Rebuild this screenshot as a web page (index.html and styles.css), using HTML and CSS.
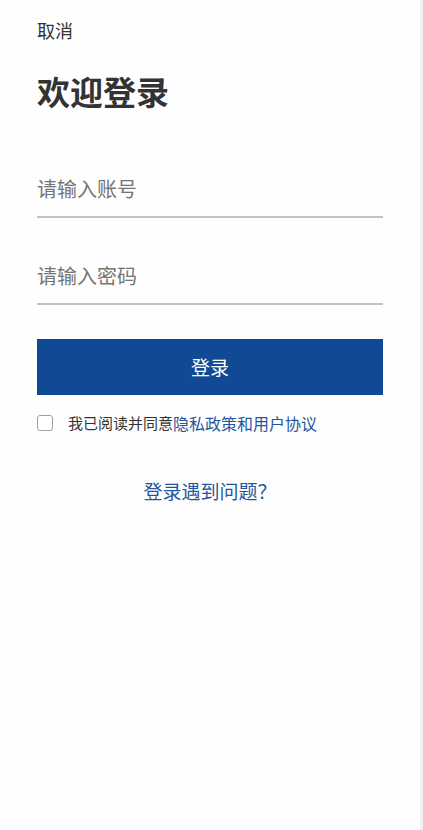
FILE: index.html
```html
<!DOCTYPE html>
<html lang="zh-CN">
<head>
    <meta charset="UTF-8">
    <meta name="viewport" content="width=device-width, initial-scale=1.0">
    <title>登录</title>
    <link rel="stylesheet" href="styles.css">
</head>
<body>
    <header>
        <a href="#" class="cancel">取消</a>
        <h1>欢迎登录</h1>
    </header>
    <main>
        <form class="login-form">
            <input type="text" class="field" placeholder="请输入账号" aria-label="账号">
            <input type="password" class="field" placeholder="请输入密码" aria-label="密码">
            <button type="submit" class="login-btn">登录</button>
            <div class="agree">
                <input type="checkbox" id="agree">
                <label for="agree">我已阅读并同意</label>
                <a href="#">隐私政策和用户协议</a>
            </div>
        </form>
        <a href="#" class="help">登录遇到问题？</a>
    </main>
</body>
</html>
```
FILE: styles.css
```css
* {
    box-sizing: border-box;
}
body {
    font-family: "Noto Sans CJK SC", sans-serif;
    margin: 0;
    padding: 15px 37px;
    min-height: 100vh;
    background: #fefefe;
    border-right: 3px solid #efefef;
    color: #333;
}
a {
    color: #1f569f;
    text-decoration: none;
}
.cancel {
    display: block;
    font-size: 18px;
    line-height: 30px;
    color: #333;
}
h1 {
    margin: 24px 0 53px;
    font-size: 33px;
    line-height: 44px;
}
.login-form {
    display: flex;
    flex-direction: column;
}
.field {
    width: 100%;
    height: 52px;
    margin-bottom: 35px;
    padding: 0 0 6px;
    border: none;
    border-bottom: 2px solid #c2c2c2;
    border-radius: 0;
    background: transparent;
    font-family: inherit;
    font-size: 20px;
    color: #333;
    outline: none;
}
.field::placeholder {
    color: #757575;
}
.login-btn {
    height: 56px;
    margin-top: -1px;
    padding: 0 0 2px;
    border: none;
    background: #114994;
    color: white;
    font-family: inherit;
    font-size: 19px;
    cursor: pointer;
}
.agree {
    display: flex;
    align-items: center;
    margin-top: 16px;
    line-height: 24px;
}
.agree input {
    appearance: none;
    width: 16px;
    height: 16px;
    margin: 0 15px 0 0;
    border: 1px solid #a0a0a0;
    border-radius: 3px;
    background: white;
}
.agree input:checked {
    background: #114994;
}
.agree label {
    font-size: 15px;
}
.agree a {
    font-size: 16px;
}
.help {
    display: block;
    margin-top: 42px;
    font-size: 19px;
    line-height: 28px;
    text-align: center;
}
```
